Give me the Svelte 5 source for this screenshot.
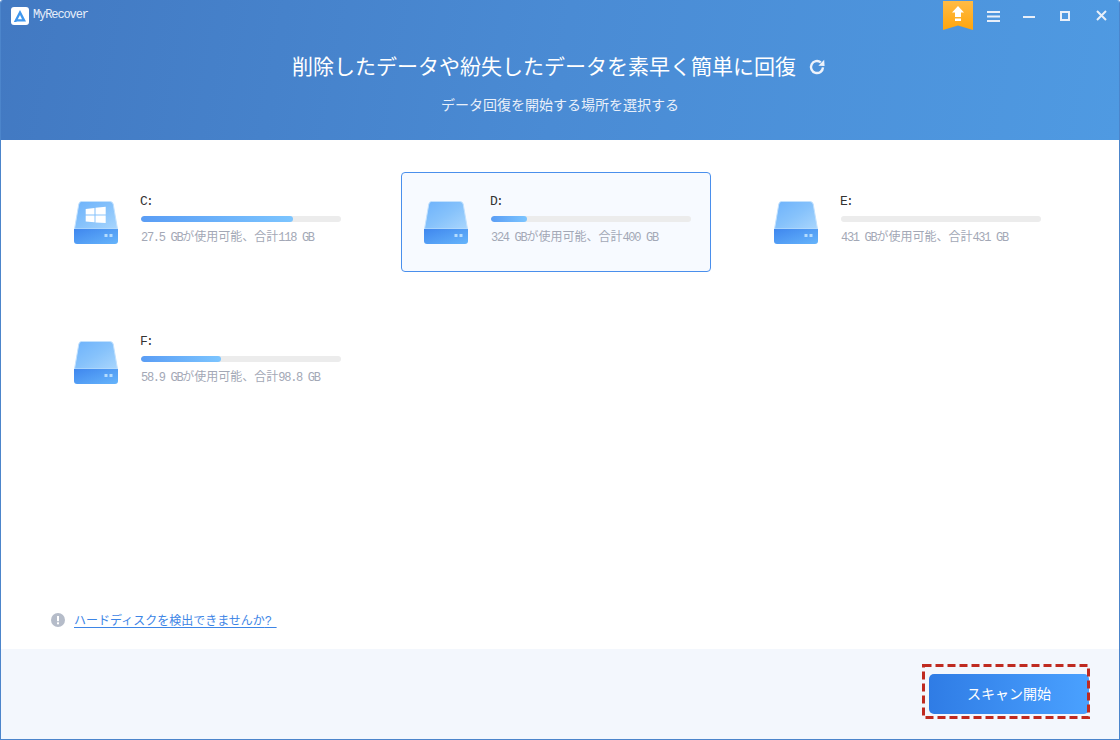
<script>
  const drives = [
    { id: 'C:', win: true, used: 76, free: '27.5', total: '118', selected: false },
    { id: 'D:', win: false, used: 18, free: '324', total: '400', selected: true },
    { id: 'E:', win: false, used: 0, free: '431', total: '431', selected: false },
    { id: 'F:', win: false, used: 40, free: '58.9', total: '98.8', selected: false }
  ];
</script>

<div class="window">
  <header class="hero">
    <div class="titlebar">
      <div class="brand">
        <svg class="logo" width="18" height="18" viewBox="0 0 18 18">
          <rect width="18" height="18" rx="3" fill="#fff" />
          <path d="M9 3 L15 14.5 H5.4 L6.8 12.2 H11 L9 8 L5.4 15 H2.8 Z" fill="#3f97ee" />
        </svg>
        <span class="appname">MyRecover</span>
      </div>
      <div class="controls">
        <svg class="ribbon" width="30" height="29" viewBox="0 0 30 29">
          <defs>
            <linearGradient id="rib" x1="0" y1="0" x2="0" y2="1">
              <stop offset="0" stop-color="#ffbb45" />
              <stop offset="1" stop-color="#ffa50c" />
            </linearGradient>
          </defs>
          <path d="M0 0 H30 V29 L15 24.5 L0 29 Z" fill="url(#rib)" />
          <path d="M15 5 L21 11.5 H18 V16 H12 V11.5 H9 Z" fill="#fff" />
          <rect x="12" y="17.5" width="6" height="2.5" fill="#fff" />
        </svg>
        <svg class="ctl menu" width="13" height="11" viewBox="0 0 13 11">
          <path d="M0 1 H13 M0 5.5 H13 M0 10 H13" stroke="#e8eff9" stroke-width="2" />
        </svg>
        <svg class="ctl min" width="12" height="2" viewBox="0 0 12 2">
          <rect width="12" height="2" fill="#e8eff9" />
        </svg>
        <svg class="ctl max" width="10" height="10" viewBox="0 0 10 10">
          <rect x="1" y="1" width="8" height="8" fill="none" stroke="#e8eff9" stroke-width="2" />
        </svg>
        <svg class="ctl close" width="11" height="11" viewBox="0 0 11 11">
          <path d="M1 1 L10 10 M10 1 L1 10" stroke="#e8eff9" stroke-width="2" />
        </svg>
      </div>
    </div>
    <div class="headline">
      <h1>削除したデータや紛失したデータを素早く簡単に回復</h1>
      <svg class="refresh" width="16" height="16" viewBox="0 0 16 16">
        <path d="M14 8.4 A6 6 0 1 1 11.8 3.4" fill="none" stroke="#eef3fb" stroke-width="2.4" />
        <path d="M9.4 6.8 L15.6 7 L15.2 0.8 Z" fill="#eef3fb" />
      </svg>
    </div>
    <p class="sub">データ回復を開始する場所を選択する</p>
  </header>

  <main class="content">
    <section class="drives">
      {#each drives as d}
        <div class="card" class:selected={d.selected}>
          <svg class="disk" width="44" height="44" viewBox="0 0 44 44">
            <defs>
              <linearGradient id="top{d.id[0]}" x1="0" y1="0" x2="1" y2="1">
                <stop offset="0" stop-color="#6db2fb" />
                <stop offset="0.5" stop-color="#86c2fb" />
                <stop offset="1" stop-color="#a9d6fd" />
              </linearGradient>
              <linearGradient id="base{d.id[0]}" x1="0" y1="0" x2="1" y2="1">
                <stop offset="0" stop-color="#3f87ee" />
                <stop offset="1" stop-color="#66b4fb" />
              </linearGradient>
            </defs>
            <path d="M7.5 0.5 H36 Q38.5 0.5 39.2 3 L43.5 28 H0.5 L4.8 3 Q5.4 0.5 7.5 0.5 Z" fill="url(#top{d.id[0]})" stroke="#c3e1fd" stroke-width="1" />
            <path d="M0 28 H44 V40 Q44 43 41 43 H3 Q0 43 0 40 Z" fill="url(#base{d.id[0]})" />
            <rect x="30.5" y="33" width="3" height="3" fill="#b5dcfd" />
            <rect x="35.5" y="33" width="3" height="3" fill="#b5dcfd" />
            {#if d.win}
              <path d="M11.7 8 L20.5 6.9 V13.6 H11.7 Z M21.5 6.8 L31.7 5.7 V13.6 H21.5 Z M11.7 14.6 H20.5 V21.3 L11.7 20.4 Z M21.5 14.6 H31.7 V22 L21.5 21.4 Z" fill="#fff" />
            {/if}
          </svg>
          <div class="info">
            <div class="name">{d.id}</div>
            <div class="track"><div class="fill" style="width: {d.used}%"></div></div>
            <div class="meta"><span class="lat">{d.free} GB</span>が使用可能、合計<span class="lat">{d.total} GB</span></div>
          </div>
        </div>
      {/each}
    </section>
    <div class="hint">
      <svg width="14" height="14" viewBox="0 0 14 14">
        <circle cx="7" cy="7" r="7" fill="#b5bcc9" />
        <rect x="6" y="3" width="2" height="5.2" fill="#fff" />
        <rect x="6" y="9.3" width="2" height="2" fill="#fff" />
      </svg>
      <span class="link">ハードディスクを検出できませんか<span class="lat">?&nbsp;</span></span>
    </div>
  </main>

  <footer class="foot">
    <div class="cta">
      <button class="start">スキャン開始</button>
      <svg class="mark" width="168" height="55" viewBox="0 0 168 55">
        <rect x="1.5" y="1.5" width="165" height="52" fill="none" stroke="#bf2a20" stroke-width="3" stroke-dasharray="8 4" />
      </svg>
    </div>
  </footer>
</div>

<style>
  :global(body) {
    margin: 0;
    background: #fff;
  }
  .window {
    box-sizing: border-box;
    width: 1120px;
    height: 740px;
    display: flex;
    flex-direction: column;
    border: 1px solid #4c85cb;
    border-top: 0;
    border-radius: 3px 3px 0 0;
    overflow: hidden;
    font-family: "Noto Sans CJK JP", "Liberation Sans", sans-serif;
    background: #fff;
  }
  .hero {
    height: 140px;
    flex: none;
    background: linear-gradient(100deg, #4279c2 0%, #4a8bd4 50%, #4f9ae2 100%);
    color: #fff;
    text-align: center;
  }
  .titlebar {
    height: 30px;
    display: flex;
    justify-content: space-between;
    align-items: flex-start;
    padding: 1px 0 0 10px;
    box-sizing: border-box;
  }
  .brand {
    display: flex;
    align-items: center;
    gap: 4px;
    padding-top: 6px;
  }
  .logo {
    display: block;
  }
  .appname {
    font: 12px "Liberation Mono", monospace;
    letter-spacing: -1.1px;
    color: #e6eefa;
    margin-top: -2px;
  }
  .controls {
    display: flex;
    align-items: flex-start;
  }
  .ribbon {
    display: block;
    margin-right: 14px;
  }
  .ctl {
    display: block;
  }
  .menu {
    margin-top: 10px;
    margin-right: 23px;
  }
  .min {
    margin-top: 15px;
    margin-right: 25px;
  }
  .max {
    margin-top: 10px;
    margin-right: 26px;
  }
  .close {
    margin-top: 9px;
    margin-right: 12px;
  }
  .headline {
    display: flex;
    justify-content: center;
    align-items: center;
    gap: 13px;
    margin-top: 19px;
    height: 32px;
  }
  h1 {
    margin: 0;
    font-size: 21px;
    font-weight: 400;
    line-height: 32px;
  }
  .refresh {
    display: block;
    margin: 3px 3px 0 0;
  }
  .sub {
    margin: 13px 0 0;
    font-size: 14px;
    line-height: 20px;
    color: #e9f0fa;
  }
  .content {
    flex: 1;
    min-height: 0;
    display: flex;
    flex-direction: column;
    justify-content: space-between;
    padding: 32px 0 20px 50px;
  }
  .drives {
    display: grid;
    grid-template-columns: repeat(3, 310px);
    grid-auto-rows: 100px;
    gap: 40px;
  }
  .card {
    box-sizing: border-box;
    display: flex;
    align-items: flex-start;
    gap: 23px;
    padding: 28px 18px 0 22px;
    border: 1px solid transparent;
    border-radius: 4px;
  }
  .card.selected {
    border-color: #4a8fec;
    background: #f7faff;
  }
  .disk {
    display: block;
    flex: none;
  }
  .info {
    width: 200px;
    flex: none;
    margin-top: -7px;
  }
  .name {
    font: 13px/16px "Liberation Mono", monospace;
    letter-spacing: -1.8px;
    color: #333;
    margin: 0 0 6px -1px;
  }
  .track {
    height: 6px;
    border-radius: 3px;
    background: #ececec;
    overflow: hidden;
  }
  .fill {
    height: 100%;
    border-radius: 3px;
    background: linear-gradient(90deg, #5a9df5, #7cc5ff);
  }
  .meta {
    margin-top: 5px;
    font-size: 12px;
    line-height: 18px;
    white-space: nowrap;
    color: #a3a8b6;
  }
  .lat {
    font: 12px "Liberation Mono", monospace;
    letter-spacing: -1.3px;
  }
  .hint {
    display: flex;
    align-items: center;
    gap: 9px;
  }
  .hint svg {
    display: block;
    flex: none;
  }
  .link {
    font-size: 12px;
    line-height: 18px;
    color: #3d85e6;
    text-decoration: underline;
    text-underline-offset: 2px;
  }
  .foot {
    height: 90px;
    flex: none;
    box-sizing: border-box;
    background: #f3f7fd;
    display: flex;
    justify-content: flex-end;
    align-items: flex-start;
    padding: 25px 30px 0 0;
  }
  .cta {
    position: relative;
  }
  .start {
    display: block;
    width: 160px;
    height: 40px;
    border: 0;
    border-radius: 5px;
    background: linear-gradient(90deg, #2f7ce5, #4aa1ff);
    color: #fff;
    font: 14px "Noto Sans CJK JP", sans-serif;
    padding: 0 0 2px;
  }
  .mark {
    position: absolute;
    left: -7px;
    top: -10px;
    display: block;
  }
</style>
